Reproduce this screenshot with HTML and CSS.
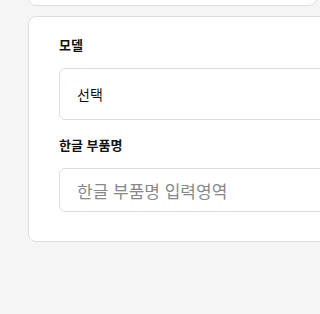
FILE: index.html
```html
<!DOCTYPE html>
<html lang="ko">
<head>
<meta charset="utf-8">
<link rel="stylesheet" href="styles.css">
</head>
<body>
<div class="page">
  <div class="card card-top"></div>
  <div class="card card-form">
    <div class="field">
      <div class="label">모델</div>
      <div class="select">선택</div>
    </div>
    <div class="field">
      <div class="label">한글 부품명</div>
      <input class="input" type="text" placeholder="한글 부품명 입력영역">
    </div>
  </div>
</div>
</body>
</html>
```
FILE: styles.css
```css
html, body {
  margin: 0;
  padding: 0;
  background: #f5f5f5;
  font-family: "Noto Sans CJK KR", "Noto Sans", sans-serif;
  overflow: hidden;
}
.page {
  padding-left: 28px;
  width: 292px;
  overflow: hidden;
}
.card {
  background: #fff;
  border: 1px solid #dedede;
  border-radius: 8px;
  box-sizing: border-box;
}
.card-top {
  width: 289px;
  height: 26px;
  margin-top: -20px;
  margin-bottom: 10px;
}
.card-form {
  width: 340px;
  padding: 19px 30px 29px 30px;
}
.field + .field {
  margin-top: 16px;
}
.label {
  font-size: 13px;
  font-weight: 700;
  line-height: 18px;
  color: #111;
  margin-bottom: 14px;
}
.select {
  height: 52px;
  box-sizing: border-box;
  border: 1px solid #dedede;
  border-radius: 6px;
  padding: 0 17px;
  display: flex;
  align-items: center;
  font-size: 14px;
  color: #111;
  width: 300px;
}
.input {
  display: block;
  height: 44px;
  width: 300px;
  box-sizing: border-box;
  border: 1px solid #dedede;
  border-radius: 6px;
  padding: 0 17px;
  font-family: inherit;
  font-size: 17px;
  color: #111;
  outline: none;
  margin: 0;
}
.input::placeholder {
  color: #888;
}
```
